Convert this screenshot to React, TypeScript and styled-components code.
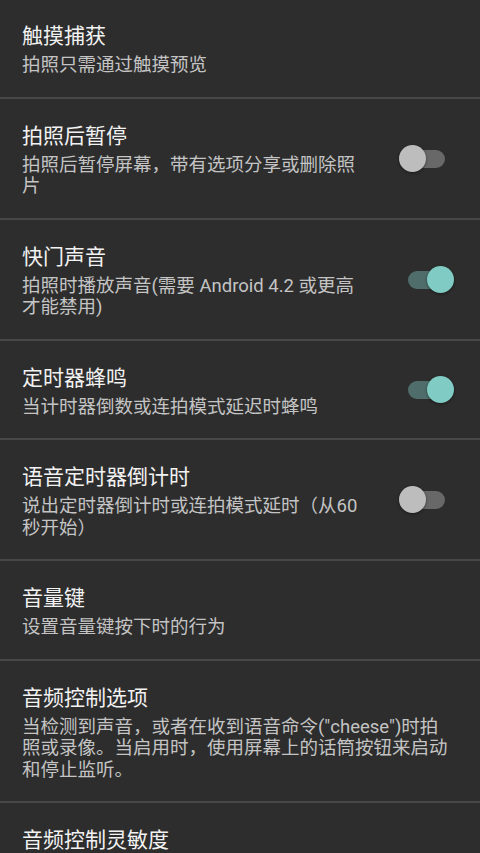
import React from 'react';
import styled, { createGlobalStyle } from 'styled-components';

const GlobalStyle = createGlobalStyle`
  html, body {
    margin: 0;
    padding: 0;
    background: #2d2d2d;
  }
  body {
    font-family: Roboto, "Noto Sans CJK SC", sans-serif;
    -webkit-font-smoothing: antialiased;
  }
`;

const List = styled.ul`
  list-style: none;
  margin: -1px 0 0;
  padding: 0;
  background: #2d2d2d;
  min-height: 100vh;
`;

const Row = styled.li`
  display: flex;
  align-items: center;
  padding: 21px 28px 20px 22px;
  border-bottom: 2px solid #474747;
`;

const Texts = styled.div`
  flex: 1;
  min-width: 0;
`;

const Title = styled.div`
  font-size: 21px;
  line-height: 33px;
  margin-bottom: 2px;
  color: #f2f2f2;
`;

const Summary = styled.div`
  font-size: 18.5px;
  line-height: 21.5px;
  color: #c4c4c4;
`;

const SwitchBox = styled.div`
  position: relative;
  flex: none;
  width: 54px;
  height: 28px;
  margin: 0 -1px 0 31px;
`;

const Track = styled.div<{ $on: boolean }>`
  position: absolute;
  left: 9px;
  top: 5px;
  width: 37px;
  height: 18px;
  border-radius: 9px;
  background: ${p => (p.$on ? '#4f6e6b' : '#686868')};
`;

const Thumb = styled.div<{ $on: boolean }>`
  position: absolute;
  top: 0;
  left: ${p => (p.$on ? '28px' : '0')};
  width: 27px;
  height: 27px;
  border-radius: 50%;
  background: ${p => (p.$on ? '#80cbc4' : '#bdbdbd')};
  box-shadow: 0 1px 3px rgba(0, 0, 0, 0.45);
`;

const Switch = ({ on }: { on: boolean }) => (
  <SwitchBox>
    <Track $on={on} />
    <Thumb $on={on} />
  </SwitchBox>
);

type Pref = { title: string; summary?: string; toggle?: boolean };

const prefs: Pref[] = [
  { title: '触摸捕获', summary: '拍照只需通过触摸预览' },
  { title: '拍照后暂停', summary: '拍照后暂停屏幕，带有选项分享或删除照片', toggle: false },
  { title: '快门声音', summary: '拍照时播放声音(需要 Android 4.2 或更高才能禁用)', toggle: true },
  { title: '定时器蜂鸣', summary: '当计时器倒数或连拍模式延迟时蜂鸣', toggle: true },
  { title: '语音定时器倒计时', summary: '说出定时器倒计时或连拍模式延时（从60秒开始）', toggle: false },
  { title: '音量键', summary: '设置音量键按下时的行为' },
  {
    title: '音频控制选项',
    summary: '当检测到声音，或者在收到语音命令("cheese")时拍照或录像。当启用时，使用屏幕上的话筒按钮来启动和停止监听。',
  },
  { title: '音频控制灵敏度' },
];

const App = () => {
  return (
    <>
      <GlobalStyle />
      <List>
        {prefs.map(p => (
          <Row key={p.title}>
            <Texts>
              <Title>{p.title}</Title>
              {p.summary && <Summary>{p.summary}</Summary>}
            </Texts>
            {p.toggle !== undefined && <Switch on={p.toggle} />}
          </Row>
        ))}
      </List>
    </>
  );
};

export default App;
